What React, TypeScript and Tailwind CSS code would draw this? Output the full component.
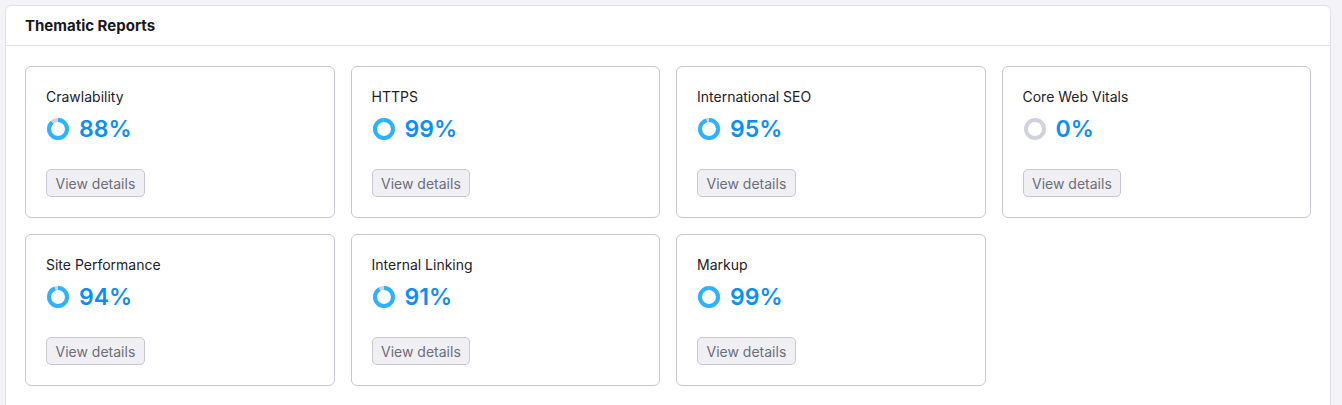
const REPORTS = [
  { id: 'crawlability', name: 'Crawlability', score: 88 },
  { id: 'https', name: 'HTTPS', score: 99 },
  { id: 'intl-seo', name: 'International SEO', score: 95 },
  { id: 'cwv', name: 'Core Web Vitals', score: 0 },
  { id: 'performance', name: 'Site Performance', score: 94 },
  { id: 'linking', name: 'Internal Linking', score: 91 },
  { id: 'markup', name: 'Markup', score: 99 },
]

function ScoreRing({ value }: { value: number }) {
  const r = 9
  const c = 2 * Math.PI * r
  const filled = (value / 100) * c

  return (
    <svg width="24" height="24" viewBox="0 0 24 24" className="flex-shrink-0">
      <circle cx="12" cy="12" r={r} fill="none" stroke="#d1d2db" strokeWidth="4" />
      {value > 0 && (
        <circle
          cx="12"
          cy="12"
          r={r}
          fill="none"
          stroke="#2cb3ff"
          strokeWidth="4"
          strokeDasharray={`${filled} ${c}`}
          transform="rotate(-90 12 12)"
        />
      )}
    </svg>
  )
}

function ReportCard({ name, score }: { name: string; score: number }) {
  return (
    <div className="border border-[#c7c8d2] rounded-md bg-white pt-[20px] pb-[20px] px-[20px] flex flex-col">
      <div className="text-[14px] leading-[20px] text-[#1f2028]">{name}</div>
      <div className="flex items-center gap-[9px] mt-[8px] h-[28px]">
        <ScoreRing value={score} />
        <span className="text-[23px] leading-[28px] font-semibold text-[#0a8ff9]">{score}%</span>
      </div>
      <div className="mt-[26px]">
        <button className="h-[28px] px-[8.5px] rounded-[5px] border border-[#c7c8d2] bg-[#f0f0f4] text-[14px] text-[#6c6e79]">
          View details
        </button>
      </div>
    </div>
  )
}

export default function App() {
  return (
    <div
      className="w-[1342px] h-[405px] bg-[#f4f4f8] pt-[5px] pl-[5px] overflow-hidden"
      style={{ fontFamily: 'Inter, "Noto Sans", sans-serif' }}
    >
      <div className="w-[1326px] h-[420px] bg-white border border-[#e0e1e9] rounded-md">
        <div className="h-[40px] flex items-center px-[19px] border-b border-[#e0e1e9]">
          <h2 className="text-[15px] font-bold text-[#171921] pt-[1px]">Thematic Reports</h2>
        </div>
        <div className="grid grid-cols-4 gap-x-[16px] gap-y-[16px] px-[19px] pt-[20px]">
          {REPORTS.map((r) => (
            <ReportCard key={r.id} name={r.name} score={r.score} />
          ))}
        </div>
      </div>
    </div>
  )
}
